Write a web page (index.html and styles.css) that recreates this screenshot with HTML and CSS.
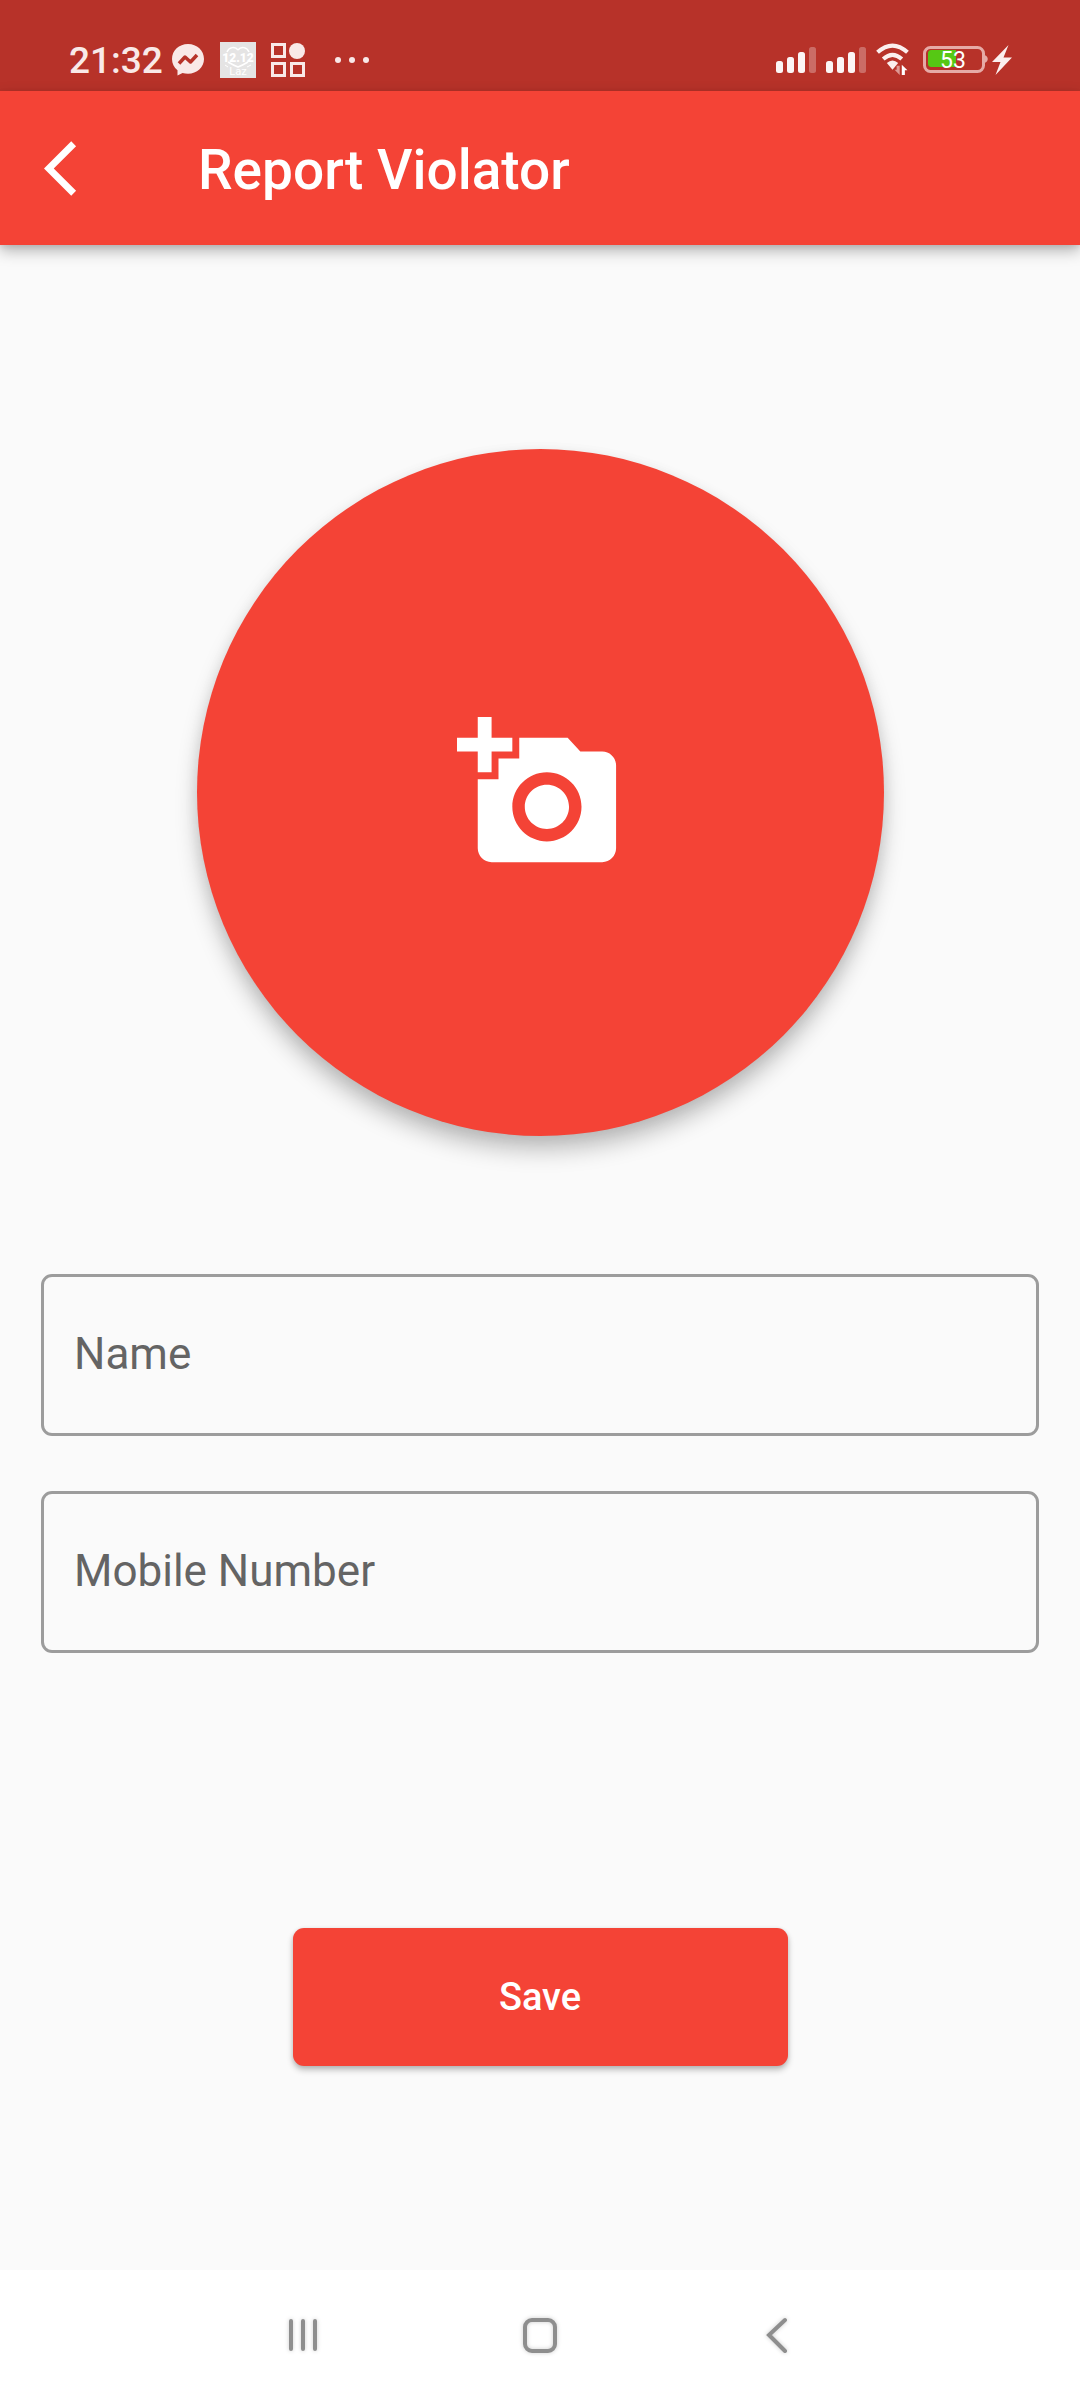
FILE: index.html
```html
<!DOCTYPE html>
<html lang="en">
<head>
<meta charset="utf-8">
<meta name="viewport" content="width=device-width, initial-scale=1">
<title>Report Violator</title>
<link rel="stylesheet" href="styles.css">
</head>
<body>
<div class="status-bar">
  <div class="status-left">
    <span class="clock">21:32</span>
    <svg class="icon-chat" viewBox="0 0 32 32" aria-hidden="true">
      <path fill="#f9e9e8" d="M16 0C7 0 0 6.500 0 15c0 4.700 2 8.500 5.500 11.300V31.500l5-2.600c1.700.5 3.500.8 5.500.8 9 0 16-6.300 16-14.700S25 0 16 0z"/>
      <path fill="none" stroke="#b73229" stroke-width="3.500" stroke-linejoin="round" d="M7 19.500l6-6.500 5.500 5 6.500-7"/>
    </svg>
    <svg class="icon-app" viewBox="0 0 36 36" aria-hidden="true">
      <path fill="#e5e4e4" d="M0 0h36v36H0z"/>
      <path fill="none" stroke="#fff" stroke-width="1.500" d="M18 8c-3-4-9-3-11 2M18 8c3-4 9-3 11 2M8 20q5 3 10 5 5-2 10-5"/>
      <text class="app-sale" x="18" y="20">12.12</text>
      <text class="app-name" x="18" y="33">Laz</text>
      <path fill="none" stroke="#fff" d="M5 23l3 2M31 23l-4 2"/>
    </svg>
    <svg class="icon-grid" viewBox="0 0 34 34" aria-hidden="true">
      <g fill="none" stroke="#f9e9e8" stroke-width="3"><path d="M1.500 1.500h12v12h-12zM1.500 20.500h12v12h-12zM20.500 20.500h12v12h-12z"/></g>
      <circle cx="26" cy="8" r="8" fill="#f9e9e8"/>
    </svg>
    <svg class="icon-more" viewBox="0 0 34 6" fill="#f9e9e8" aria-hidden="true"><circle cx="3" cy="3" r="3"/><circle cx="17" cy="3" r="3"/><circle cx="31" cy="3" r="3"/></svg>
  </div>
  <div class="status-right">
    <svg class="icon-signal" viewBox="0 0 41 26" fill="#fbf5f5" aria-hidden="true"><rect y="14" width="7" height="12" rx="2.500"/><rect x="11" y="10" width="7" height="16" rx="2.500"/><rect x="22" y="5" width="7" height="21" rx="2.500"/><rect x="33" width="7" height="26" rx="2.500" opacity=".3"/></svg>
    <svg class="icon-signal" viewBox="0 0 41 26" fill="#fbf5f5" aria-hidden="true"><rect y="14" width="7" height="12" rx="2.500"/><rect x="11" y="10" width="7" height="16" rx="2.500"/><rect x="22" y="5" width="7" height="21" rx="2.500"/><rect x="33" width="7" height="26" rx="2.500" opacity=".3"/></svg>
    <svg class="icon-wifi" viewBox="0 0 32 32" aria-hidden="true">
      <path fill="none" stroke="#fbefee" stroke-width="4" d="M1.500 9Q16-4 30.500 9M7 15.500Q16 7.500 25 15.500"/>
      <path fill="#fbefee" d="M10.500 19.500Q16 14.500 21.500 19.500L16 26z"/>
      <path fill="#dd9994" d="M20 22h3v9l-5-5h2z"/>
      <path fill="#fff" d="M25 21l5.500 5.500H28V31h-3z"/>
    </svg>
    <svg class="icon-battery" viewBox="0 0 65 27" aria-hidden="true">
      <rect x="1.500" y="1.500" width="59" height="24" rx="6" fill="none" stroke="#e6aaa6" stroke-width="3"/>
      <path fill="#e6aaa6" d="M61 9c5 1 5 7 0 8z"/>
      <path fill="#56c814" d="M9 4h24v17H9c-3 0-4-1-4-4V8c0-3 1-4 4-4z"/>
      <text class="battery-level" x="30" y="22">53</text>
    </svg>
    <svg class="icon-bolt" viewBox="0 0 20 30" fill="#fbefee" aria-hidden="true"><path d="M16.500 0L0 17h8.500L3.500 30 20 12.500h-8.500z"/></svg>
  </div>
</div>
<header class="app-bar">
  <button class="back" type="button" aria-label="Back">
    <svg viewBox="0 2 12 20" aria-hidden="true"><path fill="#fff" d="M11.670 3.870L9.900 2.100 0 12l9.900 9.900 1.770-1.770L3.540 12z"/></svg>
  </button>
  <h1 class="title">Report Violator</h1>
</header>
<main class="content">
  <button class="photo" type="button" aria-label="Add photo">
    <svg viewBox="0 0 24 24" aria-hidden="true"><path fill="#fff" d="M3 4V1h2v3h3v2H5v3H3V6H0V4zm3 6V7h3V4h7l1.830 2H21c1.100 0 2 .9 2 2v12c0 1.100-.9 2-2 2H5c-1.100 0-2-.9-2-2V10zm7 9c2.760 0 5-2.240 5-5s-2.240-5-5-5-5 2.240-5 5 2.240 5 5 5zm-3.200-5c0 1.770 1.430 3.200 3.200 3.200s3.200-1.430 3.200-3.200-1.430-3.200-3.200-3.200-3.200 1.430-3.200 3.200z"/></svg>
  </button>
  <form class="form">
    <div class="field"><input id="name" type="text" placeholder=" " autocomplete="name"><label for="name">Name</label></div>
    <div class="field"><input id="mobile" type="tel" placeholder=" " autocomplete="tel"><label for="mobile">Mobile Number</label></div>
    <button class="save" type="submit">Save</button>
  </form>
</main>
<nav class="nav-bar" aria-label="System navigation">
  <button type="button" aria-label="Recent apps"><svg viewBox="0 0 36 36" aria-hidden="true"><path d="M6 4v28M18 4v28M30 4v28"/></svg></button>
  <button type="button" aria-label="Home"><svg viewBox="0 0 36 36" aria-hidden="true"><rect x="3" y="3" width="30" height="31" rx="7"/></svg></button>
  <button type="button" aria-label="Go back"><svg viewBox="0 0 36 36" aria-hidden="true"><path d="M26 3L10 18l16 16"/></svg></button>
</nav>
</body>
</html>
```
FILE: styles.css
```css
* {
  box-sizing: border-box;
}

body {
  margin: 0;
  min-height: 100vh;
  display: flex;
  flex-direction: column;
  background: #fafafa;
  font-family: Roboto, sans-serif;
}

button {
  display: flex;
  align-items: center;
  justify-content: center;
  border: 0;
  padding: 0;
  background: none;
  color: #fff;
  font-family: inherit;
}

svg {
  display: block;
  flex: none;
}

.status-bar {
  display: flex;
  justify-content: space-between;
  height: 91px;
  padding: 28px 68px 0 69px;
  background: #b73229;
}

.status-left,
.status-right {
  display: flex;
  align-items: center;
  height: 63px;
}

.clock {
  margin-right: 9px;
  color: #f9e9e8;
  font-size: 37px;
  font-weight: 500;
  line-height: 44px;
  padding-top: 2px;
}

.icon-chat { width: 32px; height: 32px; margin-right: 16px; }
.icon-app { width: 36px; height: 36px; margin-right: 15px; }
.icon-grid { width: 34px; height: 34px; margin-right: 30px; }
.icon-more { width: 34px; height: 6px; }
.icon-signal { width: 41px; height: 26px; margin-right: 9px; }
.icon-wifi { width: 33px; height: 33px; margin-right: 14px; }
.icon-battery { width: 65px; height: 27px; margin-right: 4px; }
.icon-bolt { width: 20px; height: 30px; }

.app-sale,
.app-name,
.battery-level {
  fill: #fff;
  text-anchor: middle;
}

.app-sale { font-size: 12px; font-weight: 900; }
.app-name { font-size: 11px; }
.battery-level { font-size: 23px; }

.app-bar {
  position: relative;
  display: flex;
  align-items: center;
  height: 154px;
  background: #f44336;
  box-shadow: 0 6px 14px rgba(0, 0, 0, 0.28), 0 2px 6px rgba(0, 0, 0, 0.08);
}

.back {
  width: 156px;
  height: 100%;
  padding-left: 44px;
  justify-content: flex-start;
}

.back svg {
  width: 33px;
  height: 55px;
}

.title {
  margin: 0 0 0 42px;
  padding-top: 3px;
  color: #fff;
  font-size: 55px;
  font-weight: 500;
  line-height: 66px;
}

.content {
  flex: 1;
  display: flex;
  flex-direction: column;
  align-items: center;
  padding: 204px 41px;
}

.photo {
  width: 687px;
  max-width: 100%;
  aspect-ratio: 1;
  border-radius: 50%;
  background: #f44336;
  box-shadow: 0 15px 22px rgba(0, 0, 0, 0.22), 0 4px 14px rgba(0, 0, 0, 0.08);
}

.photo svg {
  width: 166px;
  height: 166px;
}

.form {
  display: flex;
  flex-direction: column;
  align-items: center;
  gap: 55px;
  width: 100%;
  margin-top: 138px;
}

.field {
  position: relative;
  width: 100%;
}

.field input {
  display: block;
  width: 100%;
  height: 162px;
  padding: 0 30px;
  border: 3px solid #9c9c9c;
  border-radius: 11px;
  background: transparent;
  color: #212121;
  font: 44px/52px Roboto, sans-serif;
}

.field label {
  position: absolute;
  inset: 0 0 3px;
  display: flex;
  align-items: center;
  padding: 0 33px;
  color: #646464;
  font-size: 44px;
  line-height: 52px;
  pointer-events: none;
}

.field input:focus + label,
.field input:not(:placeholder-shown) + label {
  display: none;
}

.save {
  width: 495px;
  max-width: 100%;
  height: 138px;
  margin-top: 220px;
  border-radius: 11px;
  background: #f44336;
  box-shadow: 0 4px 6px rgba(0, 0, 0, 0.24), 0 1px 4px rgba(0, 0, 0, 0.1);
  font-size: 38px;
  font-weight: 500;
  line-height: 46px;
}

.nav-bar {
  display: grid;
  grid-template-columns: repeat(3, 237px);
  justify-content: center;
  height: 130px;
  background: #fff;
}

.nav-bar svg {
  width: 36px;
  height: 36px;
  fill: none;
  stroke: #8e8e8e;
  stroke-width: 4;
  stroke-linecap: round;
  filter: drop-shadow(0 0 2px rgba(0, 0, 0, 0.2));
}
```
